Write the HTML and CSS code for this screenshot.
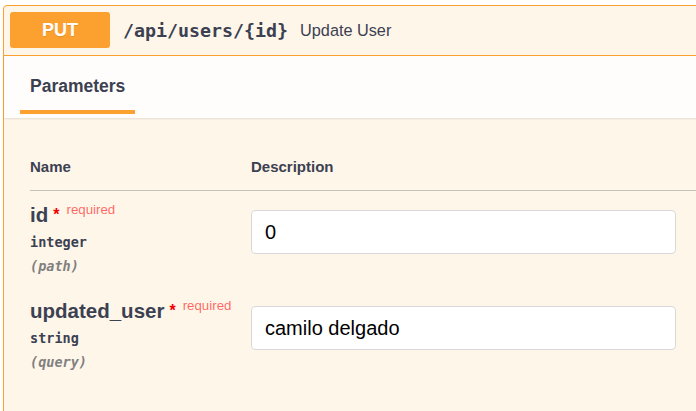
FILE: index.html
```html
<!DOCTYPE html>
<html>
<head>
<meta charset="utf-8">
<link rel="stylesheet" href="styles.css">
</head>
<body>
<div class="opblock">
  <div class="summary">
    <span class="method">PUT</span>
    <span class="path">/api/users/{id}</span>
    <span class="desc">Update User</span>
  </div>
  <div class="tabs">
    <div class="tab">Parameters</div>
  </div>
  <div class="params">
    <div class="thead">
      <div class="col-name">Name</div>
      <div class="col-desc">Description</div>
    </div>
    <div class="prow">
      <div class="col-name">
        <div class="pname">id<span class="star">*</span><span class="req">required</span></div>
        <div class="ptype">integer</div>
        <div class="pin">(path)</div>
      </div>
      <div class="col-desc">
        <input class="pinput" type="text" value="0">
      </div>
    </div>
    <div class="prow">
      <div class="col-name">
        <div class="pname">updated_user<span class="star">*</span><span class="req">required</span></div>
        <div class="ptype">string</div>
        <div class="pin">(query)</div>
      </div>
      <div class="col-desc">
        <input class="pinput" type="text" value="camilo delgado">
      </div>
    </div>
  </div>
</div>
</body>
</html>
```
FILE: styles.css
```css
html, body {
  margin: 0;
  padding: 0;
  background: #ffffff;
  overflow: hidden;
  font-family: "Liberation Sans", Arial, sans-serif;
  color: #3b4151;
}

.opblock {
  margin: 5px -40px 0 3px;
  height: 440px;
  border: 1px solid #fca130;
  border-radius: 4px;
  background: #fff6ea;
}

.summary {
  display: flex;
  align-items: center;
  padding: 6px 6px 7px;
  border-bottom: 1px solid #fca130;
}

.method {
  width: 100px;
  height: 36px;
  display: flex;
  align-items: center;
  justify-content: center;
  background: #fca130;
  color: #ffffff;
  font-weight: 700;
  font-size: 18px;
  border-radius: 3px;
  text-shadow: 0 1px 0 rgba(0, 0, 0, 0.1);
}

.path {
  margin-left: 13px;
  font-family: "DejaVu Sans Mono", "Liberation Mono", monospace;
  font-weight: 700;
  font-size: 18.3px;
  color: #3b4151;
}

.desc {
  margin-left: 12px;
  font-size: 16.25px;
  color: #3b4151;
}

.tabs {
  height: 62px;
  box-sizing: border-box;
  display: flex;
  align-items: flex-end;
  padding: 0 0 4px 16px;
  background: rgba(255, 255, 255, 0.8);
  box-shadow: 0 1px 2px rgba(0, 0, 0, 0.1);
}

.tab {
  padding: 0 10px 14px;
  border-bottom: 4px solid #fca130;
  font-size: 17.5px;
  font-weight: 700;
  line-height: 20px;
  color: #3b4151;
}

.params {
  padding-left: 26px;
}

.thead {
  display: flex;
  padding: 40px 0 14px;
  border-bottom: 1px solid rgba(59, 65, 81, 0.3);
  font-size: 15px;
  font-weight: 700;
  line-height: 18px;
}

.col-name {
  width: 221px;
  flex: none;
}

.prow {
  display: flex;
  padding: 11px 0 9px;
}

.pname {
  font-size: 20.5px;
  font-weight: 700;
  line-height: 26px;
  white-space: nowrap;
}

.star {
  margin-left: 5px;
  color: #ee0000;
  font-size: 16px;
  line-height: 0;
  vertical-align: 2px;
}

.req {
  margin-left: 7px;
  font-size: 13.3px;
  font-weight: 400;
  line-height: 0;
  color: rgba(255, 0, 0, 0.6);
  vertical-align: 8px;
}

.ptype {
  margin-top: 3px;
  font-family: "DejaVu Sans Mono", "Liberation Mono", monospace;
  font-weight: 700;
  font-size: 13.5px;
  line-height: 22px;
}

.pin {
  margin-top: 1px;
  font-family: "DejaVu Sans Mono", "Liberation Mono", monospace;
  font-style: italic;
  font-weight: 700;
  font-size: 13.5px;
  line-height: 24px;
  color: #808080;
}

.col-desc {
  flex: none;
}

.pinput {
  display: block;
  margin-top: 8px;
  width: 425px;
  height: 44px;
  box-sizing: border-box;
  padding: 0 13px;
  border: 1px solid #d9d9d9;
  border-radius: 4px;
  background: #ffffff;
  font-family: "Liberation Sans", Arial, sans-serif;
  font-size: 20px;
  color: #000000;
  outline: none;
}
```
